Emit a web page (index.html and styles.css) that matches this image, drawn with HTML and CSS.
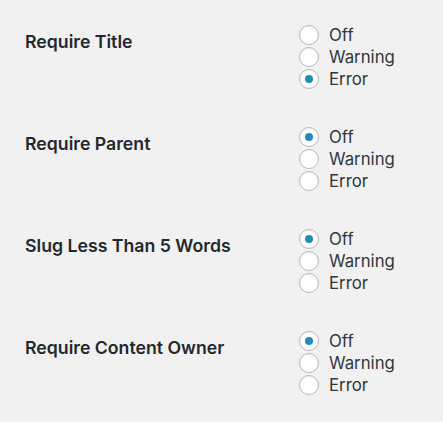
FILE: index.html
```html
<!DOCTYPE html>
<html>
<head>
<meta charset="utf-8">
<link rel="stylesheet" href="styles.css">
</head>
<body>
<div class="settings">
  <div class="row">
    <div class="label">Require Title</div>
    <div class="options">
      <label class="opt"><input type="radio" name="a"> Off</label>
      <label class="opt"><input type="radio" name="a"> Warning</label>
      <label class="opt"><input type="radio" name="a" checked> Error</label>
    </div>
  </div>
  <div class="row">
    <div class="label">Require Parent</div>
    <div class="options">
      <label class="opt"><input type="radio" name="b" checked> Off</label>
      <label class="opt"><input type="radio" name="b"> Warning</label>
      <label class="opt"><input type="radio" name="b"> Error</label>
    </div>
  </div>
  <div class="row">
    <div class="label">Slug Less Than 5 Words</div>
    <div class="options">
      <label class="opt"><input type="radio" name="c" checked> Off</label>
      <label class="opt"><input type="radio" name="c"> Warning</label>
      <label class="opt"><input type="radio" name="c"> Error</label>
    </div>
  </div>
  <div class="row">
    <div class="label">Require Content Owner</div>
    <div class="options">
      <label class="opt"><input type="radio" name="d" checked> Off</label>
      <label class="opt"><input type="radio" name="d"> Warning</label>
      <label class="opt"><input type="radio" name="d"> Error</label>
    </div>
  </div>
</div>
</body>
</html>
```
FILE: styles.css
```css
html, body {
  margin: 0;
  padding: 0;
  background: #f1f1f1;
}
body {
  font-family: Inter, "Liberation Sans", sans-serif;
  color: #32373c;
}
.settings {
  display: flex;
  flex-direction: column;
  padding-left: 25px;
}
.row {
  display: grid;
  grid-template-columns: 274px 1fr;
  padding: 24px 0 12px;
}
.label {
  font-size: 17.7px;
  font-weight: 600;
  color: #23282d;
  line-height: 22px;
  padding-top: 7px;
}
.options {
  display: flex;
  flex-direction: column;
}
.opt {
  display: flex;
  align-items: center;
  gap: 10px;
  font-size: 16.8px;
  line-height: 22px;
  height: 22px;
}
.opt input {
  appearance: none;
  -webkit-appearance: none;
  margin: 0;
  width: 20px;
  height: 20px;
  border-radius: 50%;
  border: 1px solid #b4b9be;
  background: #fff;
  box-shadow: inset 0 1px 2px rgba(0,0,0,0.07);
  display: flex;
  align-items: center;
  justify-content: center;
  box-sizing: border-box;
  flex: none;
}
.opt input:checked::before {
  content: "";
  width: 8px;
  height: 8px;
  border-radius: 50%;
  background: #1e8cbe;
}
```
